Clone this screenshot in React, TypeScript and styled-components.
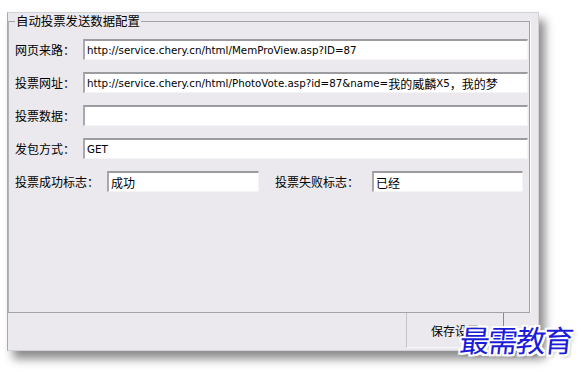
import React from "react";
import styled, { createGlobalStyle } from "styled-components";

const GlobalStyle = createGlobalStyle`
  html, body {
    margin: 0;
    padding: 0;
    background: #ffffff;
  }
  body {
    font-family: "Noto Sans CJK SC", "Liberation Sans", sans-serif;
    font-size: 12px;
    color: #000;
  }
`;

const Page = styled.div`
  width: 581px;
  height: 372px;
  padding: 12px 0 0 7px;
  box-sizing: border-box;
  position: relative;
  overflow: hidden;
`;

const Window = styled.div`
  width: 532px;
  height: 339px;
  box-sizing: border-box;
  display: flex;
  flex-direction: column;
  background: #ebe9ed;
  border: 1px solid #d2d1d6;
  border-left-color: #a9a8ad;
  box-shadow: 6px 8px 9px rgba(0, 0, 0, 0.45);
`;

const GroupBox = styled.fieldset`
  flex: 1;
  margin: 0 8px 0 0;
  padding: 10px 1px 0 6px;
  border: 1px solid #a3a2a7;
  border-left-color: #b4b3b8;
  box-shadow: 1px 0 0 #ffffff;
  min-width: 0;
  display: flex;
  flex-direction: column;
  gap: 12px;
`;

const Legend = styled.legend`
  margin-left: 0;
  padding: 0 1px;
  font-size: 12.4px;
  line-height: 16px;
  color: #000;
`;

const Row = styled.div`
  display: flex;
  align-items: center;
  height: 21px;
`;

const Label = styled.span<{ $lead?: number; $gap?: number }>`
  margin-left: ${(p) => p.$lead ?? 0}px;
  margin-right: ${(p) => p.$gap ?? 8}px;
  white-space: nowrap;
  font-size: 12px;
  line-height: 21px;
`;

const Field = styled.div<{ $width?: number }>`
  ${(p) => (p.$width ? `width: ${p.$width}px;` : "flex: 1;")}
  height: 21px;
  box-sizing: border-box;
  background: #ffffff;
  border-top: 2px solid #9c9ba0;
  border-left: 2px solid #a9a8ad;
  border-right: 1px solid #f4f4f6;
  border-bottom: 1px solid #f4f4f6;
  padding-left: 2px;
  display: flex;
  align-items: center;
  white-space: nowrap;
  overflow: hidden;
  font-family: "DejaVu Sans", "Noto Sans CJK SC", sans-serif;
  font-size: 10.3px;
  color: #000;
`;

const Cjk = styled.span`
  font-family: "Noto Sans CJK SC", sans-serif;
  font-size: 12px;
`;

const BottomBar = styled.div`
  height: 37px;
  display: flex;
  justify-content: flex-end;
  padding-right: 34px;
`;

const Button = styled.div`
  width: 98px;
  height: 35px;
  box-sizing: border-box;
  border-left: 1px solid #c4c3c8;
  border-right: 1px solid #8a8a8e;
  border-bottom: 1px solid #f7f7f9;
  display: flex;
  align-items: center;
  padding-left: 24px;
  font-size: 12px;
`;

// watermark stamped over the corner of the screenshot
const Watermark = styled.div`
  position: absolute;
  left: 460px;
  top: 317px;
  font-family: "Noto Sans CJK SC", sans-serif;
  font-size: 30px;
  letter-spacing: -2px;
  line-height: 44px;
  color: #1c1cd8;
  transform: skewX(-6deg);
  text-shadow: -2px 0 0 #fff, 2px 0 0 #fff, 0 -2px 0 #fff, 0 2px 0 #fff,
    -2px -2px 0 #fff, 2px 2px 0 #fff, -2px 2px 0 #fff, 2px -2px 0 #fff,
    3px 3px 3px rgba(0, 0, 0, 0.25);
`;

const App = () => (
  <Page>
    <GlobalStyle />
    <Window>
      <GroupBox>
        <Legend>自动投票发送数据配置</Legend>
        <Row>
          <Label>网页来路：</Label>
          <Field>http://service.chery.cn/html/MemProView.asp?ID=87</Field>
        </Row>
        <Row>
          <Label>投票网址：</Label>
          <Field>
            http://service.chery.cn/html/PhotoVote.asp?id=87&amp;name=
            <Cjk>我的威麟</Cjk>X5<Cjk>，我的梦</Cjk>
          </Field>
        </Row>
        <Row>
          <Label>投票数据：</Label>
          <Field />
        </Row>
        <Row>
          <Label>发包方式：</Label>
          <Field>GET</Field>
        </Row>
        <Row>
          <Label>投票成功标志：</Label>
          <Field $width={152}>
            <Cjk>成功</Cjk>
          </Field>
          <Label $lead={16} $gap={13}>
            投票失败标志：
          </Label>
          <Field $width={151}>
            <Cjk>已经</Cjk>
          </Field>
        </Row>
      </GroupBox>
      <BottomBar>
        <Button>保存设置</Button>
      </BottomBar>
    </Window>
    <Watermark>最需教育</Watermark>
  </Page>
);

export default App;
